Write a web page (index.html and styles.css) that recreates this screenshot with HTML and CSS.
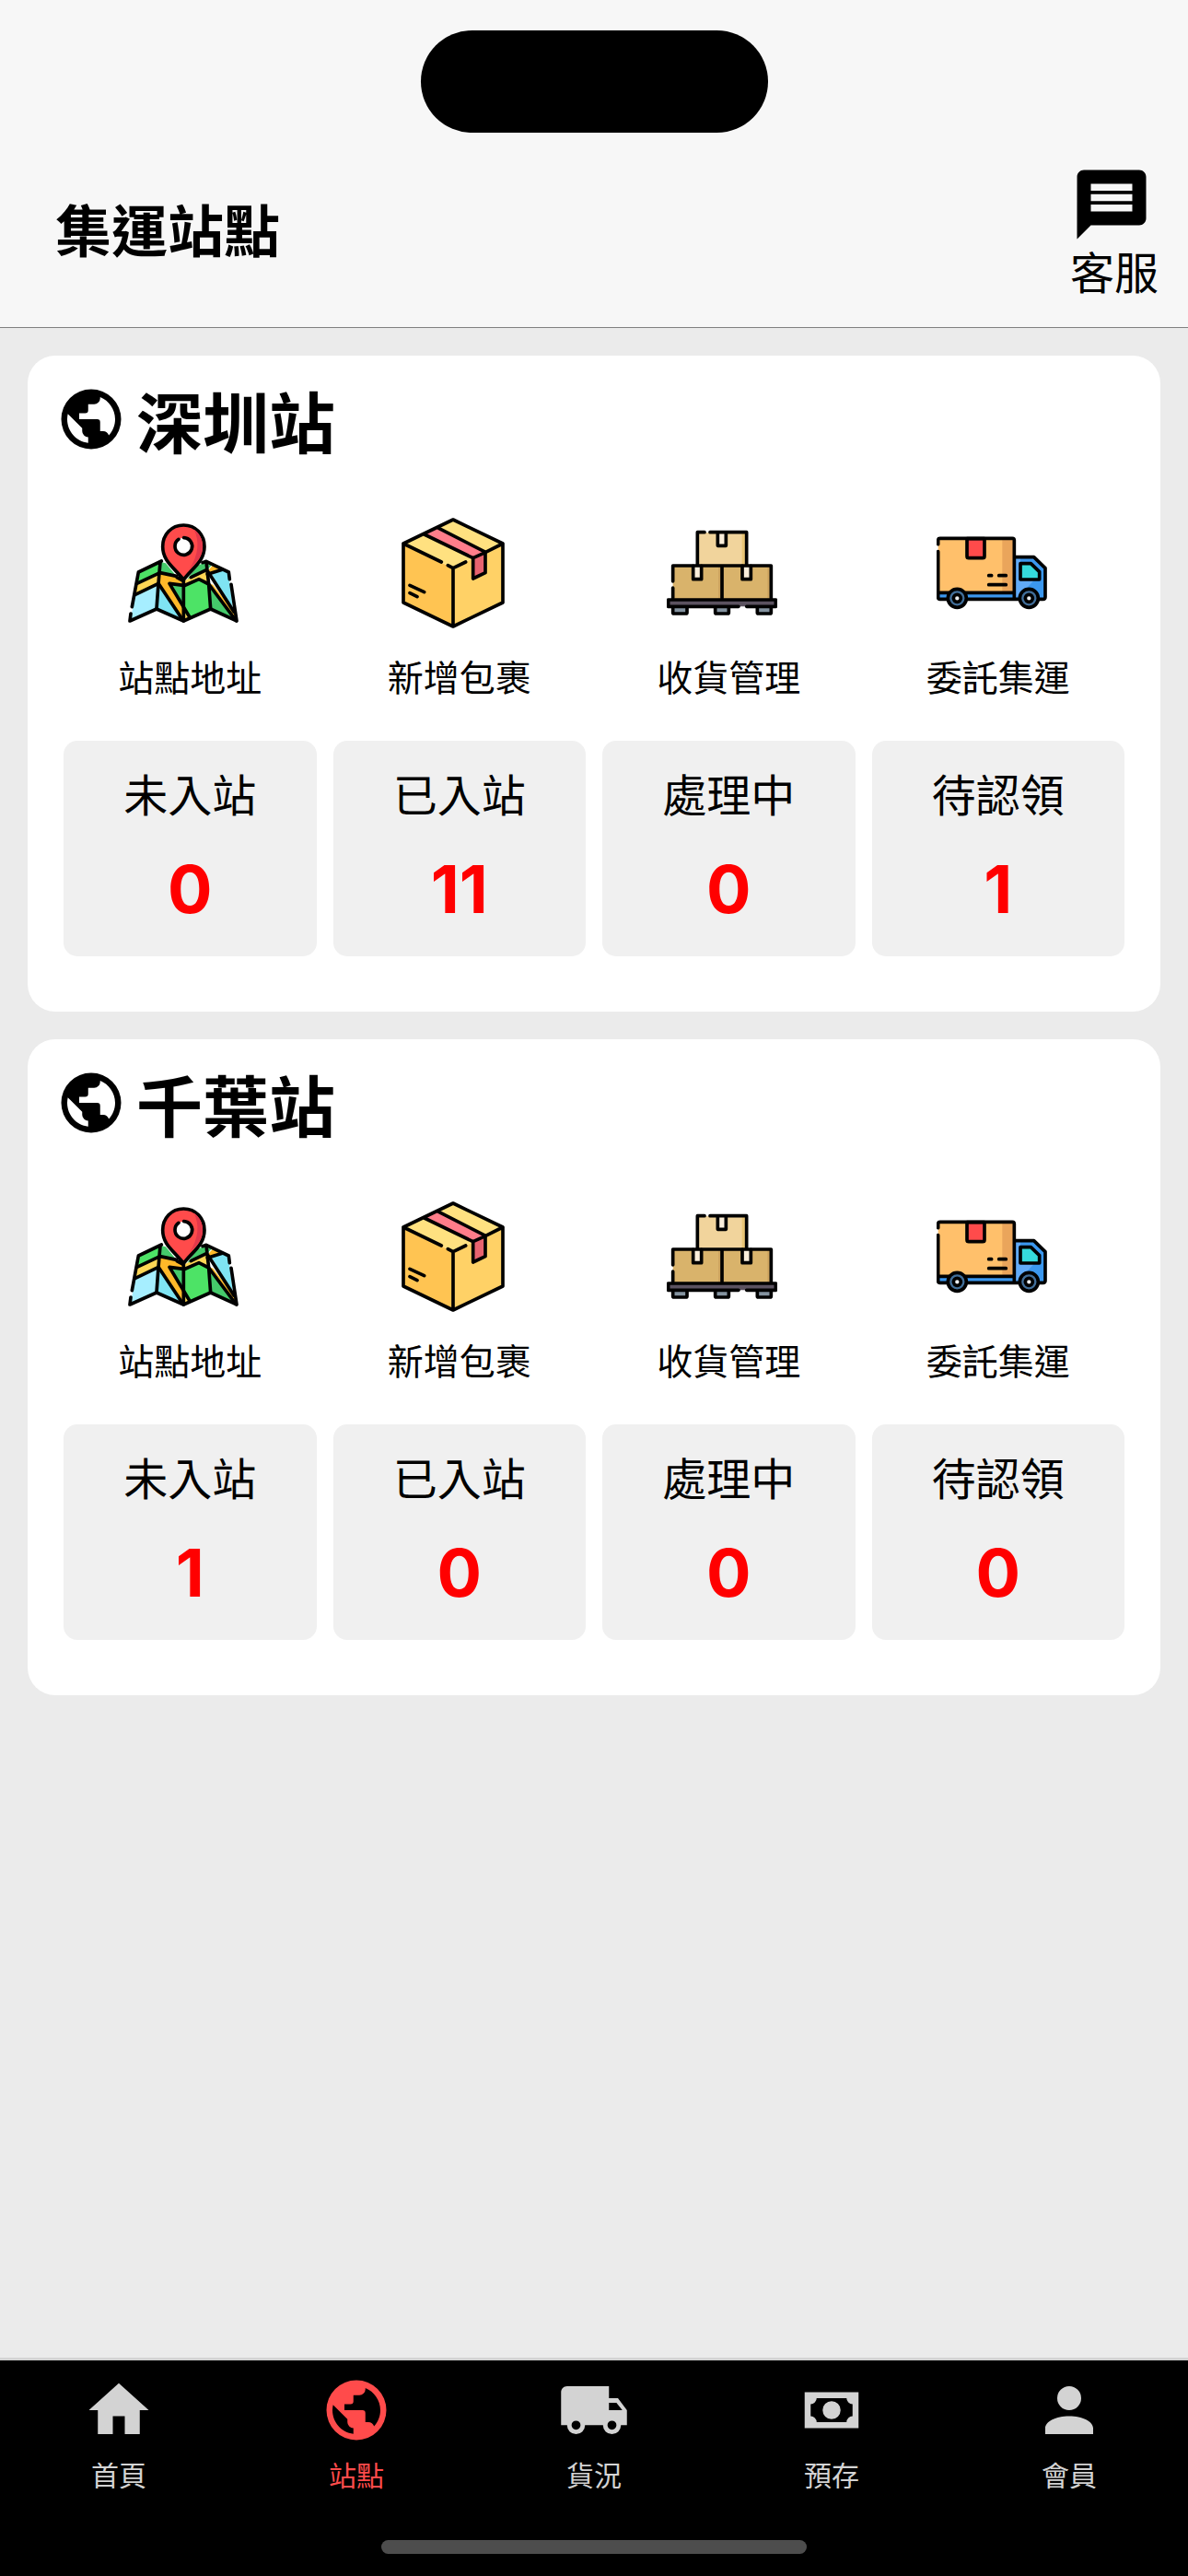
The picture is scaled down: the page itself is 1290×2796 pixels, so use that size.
FILE: index.html
```html
<!DOCTYPE html>
<html lang="zh-Hant">
<head>
    <meta charset="UTF-8">
    <meta name="viewport" content="width=device-width, initial-scale=1.0">
    <title>集運站點</title>
    <link rel="stylesheet" href="styles.css">
</head>
<body>
    <!-- icons -->
    <svg class="sprite" aria-hidden="true">
        <symbol id="i-message" viewBox="0 0 24 24">
            <path d="M20 2H4c-1.1 0-1.99.9-1.99 2L2 22l4-4h14c1.1 0 2-.9 2-2V4c0-1.1-.9-2-2-2zm-2 12H6v-2h12v2zm0-3H6V9h12v2zm0-3H6V6h12v2z"/>
        </symbol>
        <symbol id="i-earth" viewBox="0 0 24 24">
            <path d="M17.9,17.39C17.64,16.59 16.89,16 16,16H15V13A1,1 0 0,0 14,12H8V10H10A1,1 0 0,0 11,9V7H13A2,2 0 0,0 15,5V4.59C17.93,5.77 20,8.64 20,12C20,14.08 19.2,15.97 17.9,17.39M11,19.93C7.05,19.44 4,16.08 4,12C4,11.38 4.08,10.78 4.21,10.21L9,15V16A2,2 0 0,0 11,18M12,2A10,10 0 0,0 2,12A10,10 0 0,0 12,22A10,10 0 0,0 22,12A10,10 0 0,0 12,2Z"/>
        </symbol>
        <symbol id="i-home" viewBox="0 0 24 24">
            <path d="M10,20V14H14V20H19V12H22L12,3L2,12H5V20H10Z"/>
        </symbol>
        <symbol id="i-truck" viewBox="0 0 24 24">
            <path d="M18,18.5A1.5,1.5 0 0,0 19.5,17A1.5,1.5 0 0,0 18,15.5A1.5,1.5 0 0,0 16.5,17A1.5,1.5 0 0,0 18,18.5M19.5,9.5H17V12H21.46L19.5,9.5M6,18.5A1.5,1.5 0 0,0 7.5,17A1.5,1.5 0 0,0 6,15.5A1.5,1.5 0 0,0 4.5,17A1.5,1.5 0 0,0 6,18.5M20,8L23,12V17H21A3,3 0 0,1 18,20A3,3 0 0,1 15,17H9A3,3 0 0,1 6,20A3,3 0 0,1 3,17H1V6C1,4.89 1.89,4 3,4H17V8H20Z"/>
        </symbol>
        <symbol id="i-cash" viewBox="0 0 24 24">
            <path d="M3,6H21V18H3V6M12,9A3,3 0 0,1 15,12A3,3 0 0,1 12,15A3,3 0 0,1 9,12A3,3 0 0,1 12,9M7,8A2,2 0 0,1 5,10V14A2,2 0 0,1 7,16H17A2,2 0 0,1 19,14V10A2,2 0 0,1 17,8H7Z"/>
        </symbol>
        <symbol id="i-account" viewBox="0 0 24 24">
            <path d="M12,4A4,4 0 0,1 16,8A4,4 0 0,1 12,12A4,4 0 0,1 8,8A4,4 0 0,1 12,4M12,14C16.42,14 20,15.79 20,18V20H4V18C4,15.79 7.58,14 12,14Z"/>
        </symbol>

        <symbol id="p-map" viewBox="57 36 360 360">
            <path fill="#a6eeff" d="M82 284L156 250L150 334L64 372Z"/>
            <path fill="#4de366" d="M91 213L161 179V215L86 252Z"/>
            <path fill="#ffd655" d="M86 250L161 215L157 250L81 286Z"/>
            <path fill="#45ca6b" d="M161 179L180 184L216 228L161 215Z"/>
            <path fill="#7fe4f3" d="M156 250L232 368L150 334Z"/>
            <path fill="#ffb929" d="M161 218L218 228L238 240V256L192 250L238 325V372L157 252Z"/>
            <path fill="#45ca6b" d="M192 250L238 258V322Z"/>
            <path fill="#ffd655" d="M238 242L312 206L320 250L288 236L238 258ZM238 334L262 360L238 372Z"/>
            <path fill="#4de366" d="M238 262L288 236L320 250L326 332L258 364L238 342Z"/>
            <path fill="#45ca6b" d="M282 192L313 179V207L250 236ZM313 179L332 188L316 204ZM322 254L404 370L326 332Z"/>
            <path fill="#ffb929" d="M318 208L334 190L360 202L330 218ZM322 250L334 254L402 342L409 368Z"/>
            <path fill="#7fe4f3" d="M330 220L364 206L384 213L399 336Z"/>
            <g class="ink">
                <path d="M166 177L91 213L70 326M66 348L63 372L150 333L238 372L326 333L411 372L393 253M388 236L385 213L312 178L300 182"/>
                <path d="M162 180L156 250L150 333M238 244V372M312 180L320 252L326 333"/>
                <path d="M86 250L161 215L215 226M81 286L156 250L236 370M238 256L192 250L258 360M216 230L238 242M238 258L288 236L320 252L405 366M318 212L402 342M262 230L312 206M316 220L364 205"/>
            </g>
            <path class="ink" fill="#ff4b4b" d="M238 60C198 60 170 91 170 130C170 178 208 198 238 238C268 198 306 178 306 130C306 91 278 60 238 60Z"/>
            <path fill="#e3384b" d="M272 74C290 110 288 158 256 204C280 180 300 164 300 130C300 104 290 86 272 74Z"/>
            <circle cx="238" cy="129" r="28" fill="#fff"/>
            <path class="ink" d="M239 101A28 28 0 1 1 222 106"/>
        </symbol>

        <symbol id="p-box" viewBox="36 36 360 360">
            <path fill="#ffc452" d="M54 120L216 200V390L54 312Z"/>
            <path fill="#ffd166" d="M378 120L216 200V390L378 312Z"/>
            <path fill="#ffe180" d="M216 42L378 120L216 200L54 120Z"/>
            <path fill="#ff7d8a" d="M122 88L165 68L322 148L280 166Z"/>
            <path class="ink" fill="#e8636f" d="M281 167L321 149V215L281 234Z"/>
            <path class="ink" d="M178 180L54 120V312L216 390L378 312V120L216 42L54 120M216 390V200M199 191L216 200L257 180M281 167L122 90M165 68L322 148L378 120M75 256L122 278M75 281L99 293"/>
        </symbol>

        <symbol id="p-pallet" viewBox="42 6 360 360">
            <path fill="#f1d49c" d="M143 54H302V160H143Z"/>
            <path fill="#e9c576" d="M287 54H302V160H287Z"/>
            <path fill="#d9b36b" d="M62 163H382V270H62Z"/>
            <path fill="#cda45f" d="M210 163H222V270H210ZM370 163H382V270H370Z"/>
            <path fill="#8493a0" d="M62 298H108V318H62ZM200 298H244V318H200ZM337 298H382V318H337Z"/>
            <path fill="#5b5260" d="M46 273H398V295H46Z"/>
            <g class="ink">
                <path fill="#faeedb" d="M208 54V97H235V54M128 163V206H155V163M288 163V206H316V163"/>
                <path d="M165 53H142V160M183 53H302V160M62 213V162H382V268M62 234V268M222 162V268"/>
                <path d="M276 295H47V273H397V295H302M62 298V315Q62 318 65 318H105Q108 318 108 315V298M200 298V315Q200 318 203 318H241Q244 318 244 315V298M337 298V315Q337 318 340 318H379Q382 318 382 315V298"/>
            </g>
        </symbol>

        <symbol id="p-truck" viewBox="51 6 360 360">
            <path fill="#ffc06b" d="M56 73H304V250H56Z"/>
            <path fill="#eaa55b" d="M265 73H304V250H265Z"/>
            <path fill="#3b97ee" d="M56 250H304V272H56ZM304 134H368L405 172V272H304Z"/>
            <path fill="#62abf8" d="M308 138H324V210H368L340 240L308 268Z"/>
            <path class="ink" fill="#ff4b4b" d="M150 74V131Q150 137 156 137H201Q207 137 207 131V74Z"/>
            <path class="ink" fill="#35dadb" d="M324 155H358L386 182V207H324Z"/>
            <path class="ink" d="M56 92V79Q56 73 62 73H298Q304 73 304 79V270M56 116V264Q56 271 62 271H88M148 271H320M56 250H304M304 134H368L405 170V264Q405 271 398 271H384M221 194H230M254 194H277M221 224H277"/>
            <circle class="ink" cx="118" cy="268" r="30" fill="#416e99"/>
            <circle class="ink" cx="118" cy="268" r="12" fill="#eceff2"/>
            <circle class="ink" cx="352" cy="268" r="30" fill="#416e99"/>
            <circle class="ink" cx="352" cy="268" r="12" fill="#eceff2"/>
        </symbol>
    </svg>

    <header class="header">
        <div class="island"></div>
        <div class="header-bar">
            <h1>集運站點</h1>
            <button class="service" type="button">
                <svg class="service-icon"><use href="#i-message"/></svg>
                <span>客服</span>
            </button>
        </div>
    </header>

    <main class="stations">
        <section class="card">
            <h2><svg class="earth"><use href="#i-earth"/></svg>深圳站</h2>
            <div class="tools">
                <a class="tool" href="#"><svg><use href="#p-map"/></svg><span>站點地址</span></a>
                <a class="tool" href="#"><svg><use href="#p-box"/></svg><span>新增包裹</span></a>
                <a class="tool" href="#"><svg><use href="#p-pallet"/></svg><span>收貨管理</span></a>
                <a class="tool" href="#"><svg><use href="#p-truck"/></svg><span>委託集運</span></a>
            </div>
            <div class="stats">
                <a class="stat" href="#"><span>未入站</span><strong>0</strong></a>
                <a class="stat" href="#"><span>已入站</span><strong>11</strong></a>
                <a class="stat" href="#"><span>處理中</span><strong>0</strong></a>
                <a class="stat" href="#"><span>待認領</span><strong>1</strong></a>
            </div>
        </section>

        <section class="card">
            <h2><svg class="earth"><use href="#i-earth"/></svg>千葉站</h2>
            <div class="tools">
                <a class="tool" href="#"><svg><use href="#p-map"/></svg><span>站點地址</span></a>
                <a class="tool" href="#"><svg><use href="#p-box"/></svg><span>新增包裹</span></a>
                <a class="tool" href="#"><svg><use href="#p-pallet"/></svg><span>收貨管理</span></a>
                <a class="tool" href="#"><svg><use href="#p-truck"/></svg><span>委託集運</span></a>
            </div>
            <div class="stats">
                <a class="stat" href="#"><span>未入站</span><strong>1</strong></a>
                <a class="stat" href="#"><span>已入站</span><strong>0</strong></a>
                <a class="stat" href="#"><span>處理中</span><strong>0</strong></a>
                <a class="stat" href="#"><span>待認領</span><strong>0</strong></a>
            </div>
        </section>
    </main>

    <footer class="footer">
        <nav class="tabs">
            <a class="tab" href="#"><svg><use href="#i-home"/></svg><span>首頁</span></a>
            <a class="tab active" href="#"><svg><use href="#i-earth"/></svg><span>站點</span></a>
            <a class="tab" href="#"><svg><use href="#i-truck"/></svg><span>貨況</span></a>
            <a class="tab" href="#"><svg><use href="#i-cash"/></svg><span>預存</span></a>
            <a class="tab" href="#"><svg><use href="#i-account"/></svg><span>會員</span></a>
        </nav>
        <div class="home-indicator"></div>
    </footer>
</body>
</html>
```

FILE: styles.css
```css
* {
    box-sizing: border-box;
}
body {
    margin: 0;
    min-height: 100vh;
    display: flex;
    flex-direction: column;
    font-family: Inter, "Noto Sans CJK TC", sans-serif;
    background: #ebebeb;
    color: #000;
}
a {
    color: inherit;
    text-decoration: none;
}
svg {
    display: block;
    fill: currentColor;
}
.sprite {
    position: absolute;
    width: 0;
    height: 0;
}
.ink {
    stroke: #000;
    stroke-width: 11;
    stroke-linecap: round;
    stroke-linejoin: round;
}
.ink:not([fill]) {
    fill: none;
}

/* header */
.header {
    padding-top: 33px;
    background: #f7f7f7;
    border-bottom: 1px solid #808080;
}
.island {
    width: 377px;
    height: 111px;
    margin: 0 auto;
    border-radius: 56px;
    background: #000;
}
.header-bar {
    display: flex;
    justify-content: space-between;
    align-items: center;
    padding: 33px 32px 28px 60px;
}
h1 {
    margin: 0;
    font-size: 61px;
    line-height: 72px;
    font-weight: 600;
}
.service {
    display: flex;
    flex-direction: column;
    align-items: flex-start;
    padding: 0;
    border: none;
    background: none;
    color: inherit;
    font-family: inherit;
    font-size: 48px;
    line-height: 60px;
    cursor: pointer;
}
.service-icon {
    width: 90px;
    height: 90px;
}

/* station cards */
.stations {
    flex: 1;
    display: flex;
    flex-direction: column;
    gap: 30px;
    padding: 30px;
}
.card {
    padding: 30px 39px 60px 39px;
    border-radius: 30px;
    background: #fff;
}
h2 {
    display: flex;
    align-items: flex-start;
    gap: 10px;
    margin: 0 0 58px -9px;
    font-size: 72px;
    line-height: 88px;
    font-weight: 600;
}
.earth {
    width: 78px;
    height: 78px;
}
.tools, .stats {
    display: grid;
    grid-template-columns: repeat(4, 1fr);
    gap: 18px;
}
.tools {
    margin-bottom: 38px;
}
.tool {
    display: flex;
    flex-direction: column;
    align-items: center;
    gap: 24px;
    font-size: 39px;
    line-height: 60px;
}
.tool svg {
    width: 120px;
    height: 120px;
    margin-right: 14px;
}
.stat {
    display: flex;
    flex-direction: column;
    align-items: center;
    gap: 28px;
    padding: 30px 0;
    border-radius: 15px;
    background: #f0f0f0;
    font-size: 48px;
    line-height: 60px;
}
.stat strong {
    color: #ff0000;
    font-size: 72px;
    line-height: 86px;
    font-weight: 700;
}

/* bottom tabs */
.footer {
    border-top: 3px solid #d3d3d3;
    background: #000;
    color: #d3d3d3;
}
.tabs {
    display: grid;
    grid-template-columns: repeat(5, 1fr);
    padding-top: 15px;
}
.tab {
    display: flex;
    flex-direction: column;
    align-items: center;
    gap: 12px;
    font-size: 30px;
    line-height: 40px;
}
.tab svg {
    width: 78px;
    height: 78px;
}
.tab.active {
    color: #ff4b4b;
}
.home-indicator {
    width: 462px;
    height: 15px;
    margin: 50px auto 24px;
    border-radius: 8px;
    background: #4d4d4d;
}
```
